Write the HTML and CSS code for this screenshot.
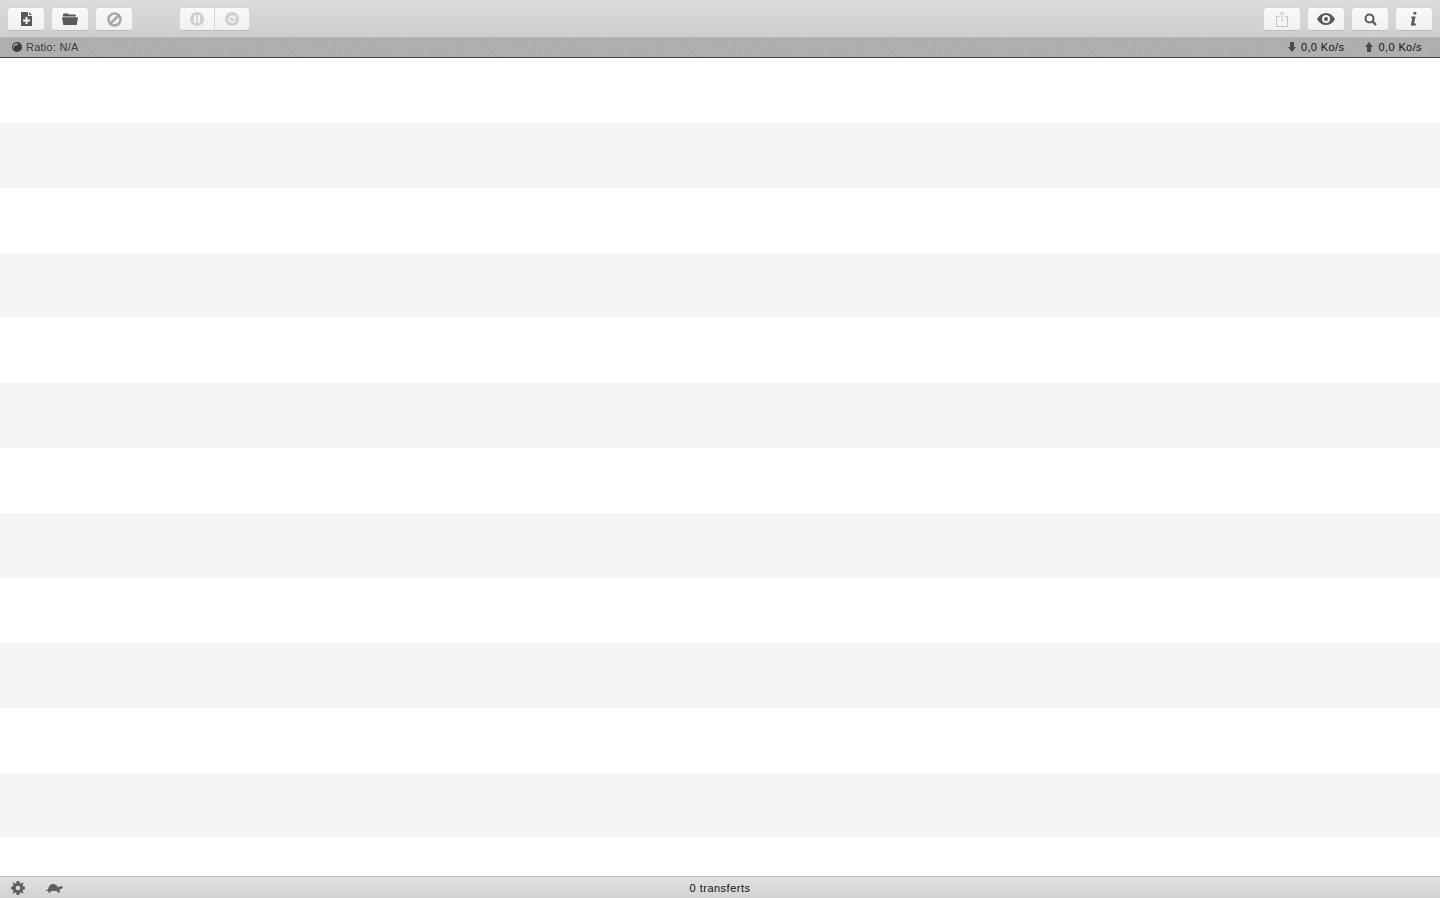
FILE: index.html
```html
<!DOCTYPE html>
<html lang="fr">
<head>
  <meta charset="UTF-8">
  <title>Transmission</title>
  <link rel="stylesheet" href="styles.css">
</head>
<body>

  <div class="toolbar">
    <div class="tool-group">
      <button class="tool">
        <svg width="11" height="14" viewBox="0 0 11 14"><path class="ico" fill-rule="evenodd" d="M0 0H7V4H11V14H0ZM8 0L11 3H8ZM4.500 5V7.500H2V9.500H4.500V12H6.500V9.500H9V7.500H6.500V5Z"/></svg>
      </button>
      <button class="tool">
        <svg width="16" height="12" viewBox="0 0 16 12"><path class="ico" d="M1 2.200L1.500 .5H6L7 1.500H13.500L14 3.500H1ZM0 4.300H16L14.700 12H1.300Z"/></svg>
      </button>
      <button class="tool">
        <svg width="15" height="15" viewBox="0 0 15 15"><circle cx="7.500" cy="7.500" r="6" fill="none" stroke="#a8a8a8" stroke-width="2.500"/><path d="M3.500 11.500L11.500 3.500" stroke="#a8a8a8" stroke-width="2.500"/></svg>
      </button>
    </div>

    <div class="tool-join">
      <button class="tool join-left">
        <svg width="14" height="14" viewBox="0 0 14 14"><path fill-rule="evenodd" fill="#cfcfcf" d="M7 0A7 7 0 1 1 7 14A7 7 0 1 1 7 0ZM4 3V11H6.200V3ZM7.800 3V11H10V3Z"/></svg>
      </button>
      <button class="tool join-right">
        <svg width="14" height="14" viewBox="0 0 14 14"><circle cx="7" cy="7" r="7" fill="#cfcfcf"/><path d="M10 8A3 3 0 1 1 9 4.800" fill="none" stroke="#f6f6f6" stroke-width="1.600"/><path fill="#f6f6f6" d="M10.800 3V7H7Z"/></svg>
      </button>
    </div>

    <div class="spacer"></div>

    <div class="tool-group">
      <button class="tool">
        <svg width="12" height="16" viewBox="0 0 12 16"><path d="M3.500 5.500H.5V15.500H11.500V5.500H8.500M6 10.500V1M3.500 3.200L6 .8L8.500 3.200" fill="none" stroke="#c4c4c4"/></svg>
      </button>
      <button class="tool">
        <svg width="18" height="12" viewBox="0 0 18 12"><path class="ico" fill-rule="evenodd" d="M0 6C2 2 5.500 0 9 0S16 2 18 6C16 10 12.500 12 9 12S2 10 0 6ZM9 2A4 4 0 1 0 9 10A4 4 0 1 0 9 2ZM9 4A2 2 0 1 1 9 8A2 2 0 1 1 9 4Z"/></svg>
      </button>
      <button class="tool">
        <svg width="13" height="13" viewBox="0 0 13 13"><circle cx="5.500" cy="5.500" r="4" fill="none" stroke="#5a5a5a" stroke-width="2"/><path d="M8.200 8.200L12 12" stroke="#5a5a5a" stroke-width="2.400"/></svg>
      </button>
      <button class="tool">
        <svg width="8" height="14" viewBox="0 0 8 14"><path class="ico" d="M3.500 0H6.300V2.600H3.500ZM1.500 4.500H5.500L4 11.500H6L5.700 13.500H.8L2.300 6.300H1.200Z"/></svg>
      </button>
    </div>
  </div>

  <div class="statusbar">
    <div class="ratio">
      <svg width="10" height="10" viewBox="0 0 10 10"><circle cx="5" cy="5" r="5" fill="#3d3d3d"/><path fill="#a0a0a0" d="M5 1A4 4 0 0 0 1.800 7.400C1.500 5 3 2.800 5 3.200C6 3.400 6.500 2 5 1Z"/></svg>
      <span>Ratio: N/A</span>
    </div>
    <div class="speeds">
      <div class="speed">
        <svg width="8" height="10" viewBox="0 0 8 10"><path fill="#4a4a4a" d="M2 0H6V5H8L4 10L0 5H2Z"/></svg>
        <span>0,0 Ko/s</span>
      </div>
      <div class="speed">
        <svg width="8" height="10" viewBox="0 0 8 10"><path fill="#4a4a4a" d="M2 10H6V5H8L4 0L0 5H2Z"/></svg>
        <span>0,0 Ko/s</span>
      </div>
    </div>
  </div>

  <div class="list">
    <div class="row"></div>
    <div class="row"></div>
    <div class="row"></div>
    <div class="row"></div>
    <div class="row"></div>
    <div class="row"></div>
    <div class="row"></div>
    <div class="row"></div>
    <div class="row"></div>
    <div class="row"></div>
    <div class="row"></div>
    <div class="row"></div>
    <div class="row"></div>
  </div>

  <div class="footer">
    <div class="footer-icons">
      <svg width="14" height="14" viewBox="0 0 14 14"><path fill="#5f5f5f" fill-rule="evenodd" d="M5.700 0H8.300L8.700 1.900L10 2.500L11.700 1.400L12.600 2.300L11.500 4L12.100 5.300L14 5.700V8.300L12.100 8.700L11.500 10L12.600 11.700L11.700 12.600L10 11.500L8.700 12.100L8.300 14H5.700L5.300 12.100L4 11.500L2.300 12.600L1.400 11.700L2.500 10L1.900 8.700L0 8.300V5.700L1.900 5.300L2.500 4L1.400 2.300L2.300 1.400L4 2.500L5.300 1.900ZM7 4.800A2.200 2.200 0 1 0 7 9.200A2.200 2.200 0 1 0 7 4.800Z"/></svg>
      <svg width="18" height="10" viewBox="0 0 18 10"><path fill="#5f5f5f" d="M0 8L3 6.500C3.500 3 5.500 1 8 1C10.500 1 12 2.500 13 4.500L14.500 3.500C15.500 3 17.500 3 18 4C17.500 5.500 16 6 14.500 6.500L15 9.500H12.500L12 8H6L5.500 9.500H3L3.500 8Z"/></svg>
    </div>
    <span class="count">0 transferts</span>
  </div>

</body>
</html>
```

FILE: styles.css
```css
html, body {
  height: 100%;
}

body {
  margin: 0;
  display: flex;
  flex-direction: column;
  overflow: hidden;
  font-family: "Liberation Sans", Arial, sans-serif;
  font-size: 11px;
  color: #222;
}

/* top toolbar */
.toolbar {
  height: 37px;
  box-sizing: border-box;
  padding: 7px 7px 0;
  display: flex;
  align-items: flex-start;
  flex-shrink: 0;
  background: linear-gradient(#dcdbdc, #cfcecf);
}

.tool-group {
  display: flex;
  gap: 6px;
}

.tool-join {
  display: flex;
  margin-left: 46px;
}

.spacer {
  flex: 1;
}

.tool {
  width: 38px;
  height: 24px;
  padding: 0;
  display: flex;
  align-items: center;
  justify-content: center;
  background: linear-gradient(#f9f9f9, #f1f1f1);
  border: 1px solid #d6d6d6;
  border-bottom-color: #bdbdbd;
  border-radius: 4px;
}

.join-left {
  width: 36px;
  border-radius: 4px 0 0 4px;
}

.join-right {
  width: 35px;
  border-left: 0;
  border-radius: 0 4px 4px 0;
}

.ico {
  fill: #595959;
}

/* ratio and speed bar, grainy like the real window */
.statusbar {
  height: 21px;
  box-sizing: border-box;
  padding: 0 18px 2px 12px;
  display: flex;
  align-items: center;
  justify-content: space-between;
  flex-shrink: 0;
  background-color: #b2b2b2;
  background-image: url("data:image/svg+xml,%3Csvg xmlns='http://www.w3.org/2000/svg' width='200' height='60'%3E%3Cfilter id='n'%3E%3CfeTurbulence type='fractalNoise' baseFrequency='.9' numOctaves='2'/%3E%3CfeColorMatrix values='0 0 0 0 .33 0 0 0 0 .33 0 0 0 0 .33 .9 0 0 0 -.3'/%3E%3C/filter%3E%3Crect width='200' height='60' filter='url(%23n)'/%3E%3C/svg%3E");
  border-top: 1px solid #b4b4b4;
  border-bottom: 1px solid #3f3f3f;
  color: #3a3a3a;
  letter-spacing: .25px;
}

.ratio {
  display: flex;
  align-items: center;
  gap: 4px;
}

.speeds {
  display: flex;
  gap: 21px;
}

.speed {
  display: flex;
  align-items: center;
  gap: 5px;
  color: #111;
  letter-spacing: .4px;
}

/* striped empty list */
.list {
  flex: 1;
  overflow: hidden;
}

.row {
  height: 65px;
  background-color: #fff;
}

.row:nth-child(even) {
  background-color: #f5f5f5;
}

/* bottom bar */
.footer {
  height: 22px;
  box-sizing: border-box;
  padding: 1px 0 0 11px;
  display: flex;
  align-items: center;
  flex-shrink: 0;
  position: relative;
  background: linear-gradient(#e0e0e0, #d3d3d3);
  border-top: 1px solid #b9b9b9;
}

.footer-icons {
  display: flex;
  align-items: center;
  gap: 20px;
}

.count {
  position: absolute;
  left: 0;
  right: 0;
  text-align: center;
  color: #111;
  letter-spacing: .5px;
}
```
